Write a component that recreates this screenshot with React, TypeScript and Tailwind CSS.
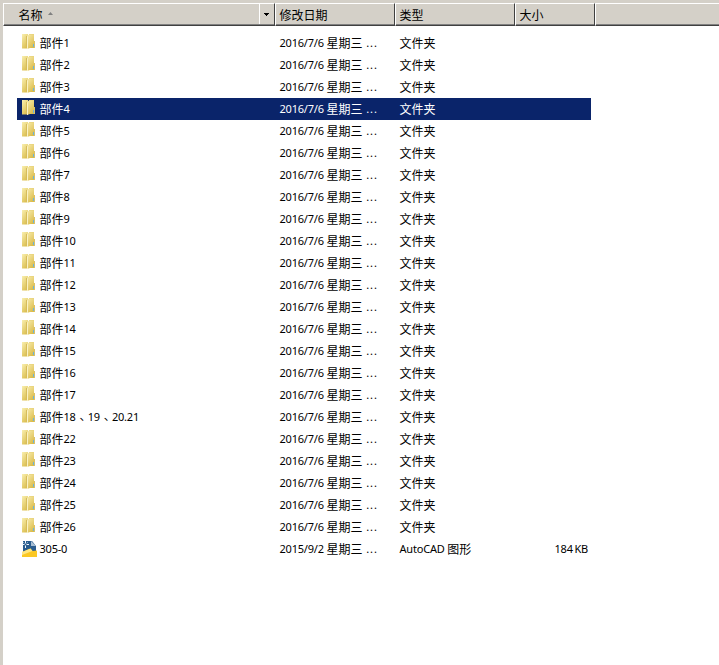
import { clsx } from 'clsx';

interface FileEntry {
    name: string;
    modified: string;
    type: string;
    size?: string;
    drawing?: boolean;
}

const folderNames = [
    ...Array.from({ length: 17 }, (_, i) => `部件${i + 1}`),
    '部件18、19、20.21',
    '部件22',
    '部件23',
    '部件24',
    '部件25',
    '部件26',
];

const entries: FileEntry[] = [
    ...folderNames.map((name) => ({
        name,
        modified: '2016/7/6 星期三 ...',
        type: '文件夹',
    })),
    {
        name: '305-0',
        modified: '2015/9/2 星期三 ...',
        type: 'AutoCAD 图形',
        size: '184 KB',
        drawing: true,
    },
];

const selectedName = '部件4';

// Latin runs are set one size smaller than the Chinese text
function Label({ text }: { text: string }) {
    const parts = text.split(/( \.\.\.|、|[\x20-\x7e]+)/).filter(Boolean);
    return (
        <span className="whitespace-pre">
            {parts.map((part, i) =>
                /^[\x20-\x7e]/.test(part) ? (
                    <span
                        key={i}
                        className={clsx(
                            "align-[1px] font-['Noto_Sans'] text-[11px] leading-3",
                            part.endsWith('...')
                                ? 'tracking-[0.9px]'
                                : 'tracking-[-0.2px]'
                        )}
                    >
                        {part}
                    </span>
                ) : (
                    <span
                        key={i}
                        lang={part === '、' ? 'zh-TW' : undefined}
                        className={clsx(
                            part === '、' &&
                                "align-[-2px] font-['Noto_Sans_CJK_TC'] leading-3"
                        )}
                    >
                        {part}
                    </span>
                )
            )}
        </span>
    );
}

function FolderIcon() {
    return (
        <svg
            width="16"
            height="16"
            viewBox="0 0 16 16"
            className="mb-0.5 shrink-0"
        >
            <defs>
                <linearGradient id="folder-back" x1="0" y1="0" x2="0.6" y2="1">
                    <stop offset="0" stopColor="#f9efb0" />
                    <stop offset="1" stopColor="#dcc052" />
                </linearGradient>
                <linearGradient id="folder-front" x1="0" y1="0" x2="0.6" y2="1">
                    <stop offset="0" stopColor="#f8ecac" />
                    <stop offset="1" stopColor="#dbbc4c" />
                </linearGradient>
            </defs>
            <path d="M7 0h5v7l1 1v6H7z" fill="#e5cf72" />
            <path d="M0 0h6v14.5H0z" fill="url(#folder-back)" />
            <path d="M5 2 7 .5h5V14H8l-3 1z" fill="url(#folder-front)" />
            <path d="M4 2h1v12H4z" fill="#d6bc5c" />
            <path d="M5 2.5h1V15H5z" fill="#fbf3c4" />
            <path d="M12 7h1v7h-1z" fill="#dcc264" />
            <path d="M11 10h1v3h-1z" fill="#6bb4dc" />
        </svg>
    );
}

function DrawingIcon() {
    return (
        <svg
            width="16"
            height="16"
            viewBox="0 0 16 16"
            className="mb-px shrink-0"
        >
            <path d="M1 0h9l4 5v10H1z" fill="#2a5c8e" />
            <path d="m9 0 5 5H9z" fill="#a9bfd3" />
            <path d="M0 11 8.5 7.5 10.5 10 15 9.5V16H0z" fill="#fbc823" />
            <path d="M0 11 8.5 7.5l2 2.5L0 14z" fill="#ffe680" />
            <path
                d="M3.5 0v2.5M3.5 4.5V7M0 3.5h2.5M4.5 3.5H7"
                stroke="#f2f7fb"
                strokeWidth="1"
            />
            <path
                d="m1 1 1.5 1.5M6 1 4.5 2.5"
                stroke="#9fbcd6"
                strokeWidth="0.8"
            />
        </svg>
    );
}

const headerCell =
    'flex h-[23px] items-center border-t border-l border-t-white border-l-white border-b border-b-[#404040] shadow-[inset_0_-1px_0_#808080]';
const headerEdge =
    'border-r border-r-[#404040] shadow-[inset_-1px_-1px_0_#808080]';

function Header() {
    return (
        <div className="flex bg-[#d4d0c8] pt-[3px]">
            <div className={clsx(headerCell, headerEdge, 'w-[272px]')}>
                <span className="pl-[14.5px]">名称</span>
                <svg width="5" height="3" className="mb-0.5 ml-[5px]">
                    <path d="M0 3 2.5 0 5 3z" fill="#808080" />
                </svg>
                <div className="mb-px ml-auto flex h-5 w-[15px] items-center border-l border-white pl-1">
                    <svg width="5" height="3" shapeRendering="crispEdges">
                        <path d="M0 0h5v1H4v1H3v1H2V2H1V1H0z" />
                    </svg>
                </div>
            </div>
            <div className={clsx(headerCell, headerEdge, 'w-[120px] pl-[3.5px]')}>
                修改日期
            </div>
            <div className={clsx(headerCell, headerEdge, 'w-[120px] pl-[3.5px]')}>
                类型
            </div>
            <div className={clsx(headerCell, headerEdge, 'w-20 pl-[3.5px]')}>
                大小
            </div>
            <div className={clsx(headerCell, 'flex-1')} />
        </div>
    );
}

function FileRow({ entry }: { entry: FileEntry }) {
    return (
        <div
            className={clsx(
                'flex h-[22px] w-[574px] items-center',
                entry.name === selectedName && 'bg-[#0a246a] text-white'
            )}
        >
            <div className="flex w-[262.5px] items-center gap-[1.5px] pl-[5px]">
                {entry.drawing ? <DrawingIcon /> : <FolderIcon />}
                <Label text={entry.name} />
            </div>
            <div className="w-[120px]">
                <Label text={entry.modified} />
            </div>
            <div className="w-[120px]">
                <Label text={entry.type} />
            </div>
            <div className="flex-1 pr-[3px] text-right [word-spacing:-1px]">
                {entry.size && <Label text={entry.size} />}
            </div>
        </div>
    );
}

function App() {
    return (
        <div className="h-[665px] w-[719px] overflow-hidden bg-[#d4d0c8] pl-[3px] font-['Noto_Sans_CJK_SC',sans-serif] text-xs text-black">
            <Header />
            <div className="h-full bg-white pt-1.5 pl-3.5">
                {entries.map((entry) => (
                    <FileRow key={entry.name} entry={entry} />
                ))}
            </div>
        </div>
    );
}

export default App;
